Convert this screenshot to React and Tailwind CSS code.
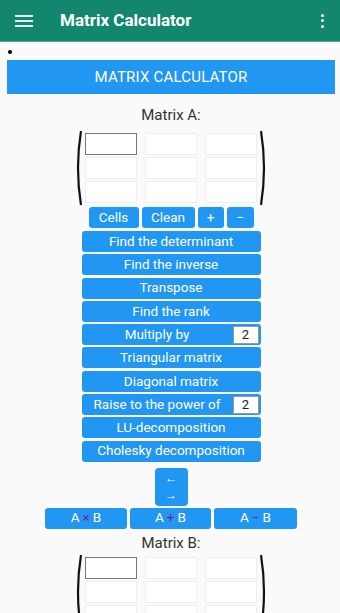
import React from "react";

const font = { fontFamily: "Roboto, 'Noto Sans', sans-serif" };

function Paren({ right }) {
  return (
    <svg width="8" height="76" viewBox="0 0 8 76" className="shrink-0">
      {right ? (
        <path d="M1 1 Q7 38 1 75" stroke="#111" strokeWidth="2.2" fill="none" />
      ) : (
        <path d="M7 1 Q1 38 7 75" stroke="#111" strokeWidth="2.2" fill="none" />
      )}
    </svg>
  );
}

function Matrix() {
  const cells = Array.from({ length: 9 });
  return (
    <div className="flex items-center justify-center gap-[3px] pl-[2px]">
      <Paren />
      <div className="grid grid-cols-[52px_52px_52px] gap-x-[8px] gap-y-[2px] py-[1px]">
        {cells.map((_, i) => (
          <div
            key={i}
            className={
              "h-[22px] bg-white " +
              (i === 0 ? "border border-[#777]" : "border border-[#efefef]")
            }
          />
        ))}
      </div>
      <Paren right />
    </div>
  );
}

function Btn({ children, className = "" }) {
  return (
    <div
      className={
        "flex items-center justify-center rounded-[3px] bg-[#2196f3] text-white text-[13.5px] leading-none " +
        className
      }
    >
      {children}
    </div>
  );
}

export default function App() {
  const list = [
    "Find the determinant",
    "Find the inverse",
    "Transpose",
    "Find the rank",
    "Multiply by",
    "Triangular matrix",
    "Diagonal matrix",
    "Raise to the power of",
    "LU-decomposition",
    "Cholesky decomposition",
  ];
  return (
    <div className="w-[340px] h-[613px] overflow-hidden bg-[#fafafa]" style={font}>
      <div className="h-[42px] bg-[#12876e] flex items-center text-white border-b border-[#4aa68f]">
        <svg width="18" height="14" viewBox="0 0 18 14" className="ml-[15px]">
          <rect x="0" y="1" width="18" height="2" fill="#e8f5f1" />
          <rect x="0" y="6" width="18" height="2" fill="#e8f5f1" />
          <rect x="0" y="11" width="18" height="2" fill="#e8f5f1" />
        </svg>
        <div className="ml-[27px] text-[17px] font-bold">Matrix Calculator</div>
        <div className="ml-auto mr-[16px] flex flex-col gap-[2.5px]">
          <div className="w-[3px] h-[3px] bg-white rounded-full" />
          <div className="w-[3px] h-[3px] bg-white rounded-full" />
          <div className="w-[3px] h-[3px] bg-white rounded-full" />
        </div>
      </div>
      <div className="h-[18px] pl-[8px] flex items-center">
        <div className="w-[4px] h-[4px] rounded-full bg-black mt-[2px]" />
      </div>
      <div className="ml-[7px] mr-[5px] h-[34px] bg-[#2196f3] flex items-center justify-center text-white text-[15px] tracking-[0.2px]">
        MATRIX CALCULATOR
      </div>
      <div className="text-center text-[15px] text-[#333] mt-[12px] leading-[18px] pl-[2px]">Matrix A:</div>
      <div className="mt-[6px]">
        <Matrix />
      </div>
      <div className="flex justify-center gap-[3px] mt-[1px] pl-[2px]">
        <Btn className="w-[50px] h-[21px]">Cells</Btn>
        <Btn className="w-[53px] h-[21px]">Clean</Btn>
        <Btn className="w-[26px] h-[21px]">+</Btn>
        <Btn className="w-[27px] h-[21px]">−</Btn>
      </div>
      <div className="flex flex-col items-center gap-[2.3px] mt-[3px] pl-[2px]">
        {list.map((t) =>
          t === "Multiply by" || t === "Raise to the power of" ? (
            <div key={t} className="w-[179px] h-[21px] rounded-[3px] bg-[#2196f3] flex items-center text-white text-[13.5px] leading-none">
              <div className="flex-1 text-center">{t}</div>
              <div className="w-[26px] h-[18px] mr-[2px] bg-white border border-[#999] text-[#222] text-[13px] flex items-center justify-center">2</div>
            </div>
          ) : (
            <Btn key={t} className="w-[179px] h-[21px]">{t}</Btn>
          )
        )}
      </div>
      <div className="flex justify-center mt-[6px] pl-[2px]">
        <div className="w-[33px] h-[38px] rounded-[4px] bg-[#2196f3] flex flex-col items-center justify-center gap-[2px] text-white text-[12px] leading-[15px]">
          <span>←</span>
          <span>→</span>
        </div>
      </div>
      <div className="flex justify-center gap-[3px] mt-[2px] pl-[2px]">
        <Btn className="w-[82px] h-[21px]">
          A<span className="text-[#7b1fa2] mx-[3px]">×</span>B
        </Btn>
        <Btn className="w-[81px] h-[21px]">
          A<span className="text-[#7b1fa2] mx-[3px]">+</span>B
        </Btn>
        <Btn className="w-[83px] h-[21px]">
          A<span className="text-[#7b1fa2] mx-[3px]">−</span>B
        </Btn>
      </div>
      <div className="text-center text-[15px] text-[#333] mt-[5px] leading-[18px] pl-[2px]">Matrix B:</div>
      <div className="mt-[2px]">
        <Matrix />
      </div>
    </div>
  );
}
